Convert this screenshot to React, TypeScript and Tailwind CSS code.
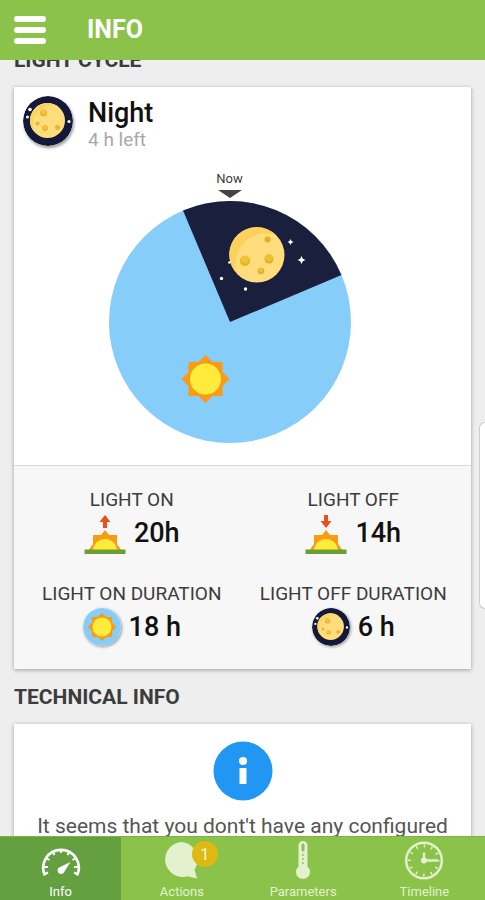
import type { ReactNode } from "react";

interface IconProps {
  className?: string;
}

interface StatProps {
  label: string;
  value: string;
  icon: ReactNode;
}

interface TabProps {
  label: string;
  icon: ReactNode;
  active?: boolean;
  badge?: number;
}

const SUN_RAYS =
  "M24 0 L31 7 H41 V17 L48 24 L41 31 V41 H31 L24 48 L17 41 H7 V31 L0 24 L7 17 V7 H17 Z";

const MoonIcon = ({ className }: IconProps) => (
  <svg viewBox="0 0 50 50" className={className} aria-hidden="true">
    <circle cx="25" cy="25" r="25" fill="#14193a" />
    <circle cx="24.5" cy="24.5" r="17.5" fill="#ffdc7c" />
    <path d="M7 24.5a17.5 17.5 0 0 1 29-13.2A19 19 0 0 0 11 35.5A17.5 17.5 0 0 1 7 24.5Z" fill="#fdd362" />
    <circle cx="20.5" cy="17" r="3.5" fill="#e9b52f" />
    <circle cx="14.5" cy="27.5" r="2" fill="#e9b52f" />
    <circle cx="22" cy="32" r="3" fill="#e9b52f" />
    <circle cx="34.5" cy="31.5" r="2.5" fill="#e9b52f" />
    <circle cx="20.5" cy="16" r="2.5" fill="#f2c443" />
    <circle cx="22" cy="31.3" r="2" fill="#f2c443" />
    <g fill="#fff">
      <circle cx="7" cy="13.5" r="1.8" />
      <circle cx="4.5" cy="21" r="1.5" />
      <circle cx="46" cy="25.5" r="1.6" />
    </g>
  </svg>
);

const SunIcon = ({ className }: IconProps) => (
  <svg viewBox="0 0 64 64" className={className} aria-hidden="true">
    <circle cx="32" cy="32" r="32" fill="#87cdf9" />
    <g transform="translate(8 8)">
      <path d={SUN_RAYS} fill="#fb9a13" />
      <circle cx="24" cy="24" r="16" fill="#ffeb3b" />
    </g>
  </svg>
);

const HorizonIcon = ({ className, down }: IconProps & { down?: boolean }) => (
  <svg viewBox="0 -4 42 44" className={className} aria-hidden="true">
    <path
      d={down ? "M19 0h4v6h3.5L21 13l-5.5-7H19z" : "M21 0l5.5 7H23v6h-4V7h-3.5z"}
      fill="#ec4f1c"
    />
    <path d="M4 36l5-7V20h8l4-5 4 5h8v9l5 7z" fill="#fb9a13" />
    <path d="M9 36a12 12 0 0 1 24 0z" fill="#ffeb3b" />
    <rect x="0.5" y="34.5" width="41" height="4.500" fill="#6a9f38" />
  </svg>
);

const GaugeIcon = ({ className }: IconProps) => (
  <svg viewBox="0 0 40 40" className={className} fill="none" stroke="currentColor" aria-hidden="true">
    <path d="M4 34.500A17.800 17.800 0 1 1 36 34.500" strokeWidth="2.600" />
    <path
      d="M20 8v4M11.500 10.500l2 3.500M28.500 10.500l-2 3.500M5 17l3.500 2M35 17l-3.500 2M2.500 26h4.500M37.500 26h-4.500M4 33l3-1.500M36 33l-3-1.500"
      strokeWidth="2"
    />
    <path d="M29.500 21l-6.300 10a3.500 3.500 0 1 1-4.700-4.700z" fill="currentColor" stroke="none" />
  </svg>
);

const BubbleIcon = ({ className }: IconProps) => (
  <svg viewBox="0 0 40 40" className={className} fill="currentColor" aria-hidden="true">
    <path d="M20 1a17.5 17.5 0 1 0 5.5 34.3L35 37.5l-2.500-9A17.500 17.500 0 0 0 20 1z" />
  </svg>
);

const ThermometerIcon = ({ className }: IconProps) => (
  <svg viewBox="0 0 40 40" className={className} aria-hidden="true">
    <path
      d="M20 0a4.5 4.5 0 0 0-4.5 4.5v21a7 7 0 1 0 9 0v-21A4.5 4.5 0 0 0 20 0z"
      fill="currentColor"
    />
    <path d="M20 4v5" stroke="#8bc34a" strokeWidth="3" strokeLinecap="round" />
    <path d="M20 13v10" stroke="#8bc34a" strokeWidth="2" strokeDasharray="2 2" opacity="0.7" />
  </svg>
);

const ClockIcon = ({ className }: IconProps) => (
  <svg viewBox="0 0 40 40" className={className} fill="none" stroke="currentColor" aria-hidden="true">
    <circle cx="20" cy="19.5" r="17.8" strokeWidth="2.4" />
    <circle cx="20" cy="19.5" r="14.5" strokeWidth="3" strokeDasharray="1.5 6.09" strokeDashoffset="0.75" />
    <path d="M20 11.5v8h14" strokeWidth="2.4" />
    <circle cx="20" cy="19.5" r="3" fill="currentColor" stroke="none" />
  </svg>
);

const CycleChart = () => (
  <svg viewBox="0 0 242 242" className="block size-[242px]" role="img" aria-label="Light cycle">
    <circle cx="121" cy="121" r="121" fill="#87cdf9" />
    <path d="M121 121L74 9.5A121 121 0 0 1 232.5 74Z" fill="#1a1f3d" />
    {/* moon */}
    <circle cx="148" cy="54" r="27.5" fill="#ffdc7c" />
    <path
      d="M126 70.5A27.5 27.5 0 0 1 167 34A30 30 0 0 0 127 60Q125 66 126 70.5Z"
      fill="#fdd15b"
    />
    <g fill="#e3b020">
      <circle cx="136" cy="60" r="5" />
      <circle cx="160" cy="58" r="4.5" />
      <circle cx="152" cy="70" r="3.3" />
      <circle cx="158.5" cy="38.5" r="3" />
    </g>
    <g fill="#efc134">
      <circle cx="136" cy="58.5" r="4" />
      <circle cx="160" cy="56.5" r="3.5" />
      <circle cx="152" cy="69" r="2.3" />
    </g>
    {/* stars */}
    <g fill="#fff">
      <path d="M181.5 38l1 2 2 1-2 1-1 2-1-2-2-1 2-1z" />
      <path d="M192.5 55l1.3 2.7 2.7 1.3-2.7 1.3-1.3 2.7-1.3-2.7-2.7-1.3 2.7-1.3z" />
      <circle cx="112.5" cy="77.5" r="1.7" />
      <circle cx="136.5" cy="88" r="1.7" />
      <circle cx="120.5" cy="61.5" r="1.3" />
    </g>
    <g transform="translate(72.5 154)">
      <path d={SUN_RAYS} fill="#fb9a13" />
      <circle cx="24" cy="24" r="15.5" fill="#ffeb3b" />
    </g>
  </svg>
);

const Stat = ({ label, value, icon }: StatProps) => (
  <div className="flex flex-col items-center">
    <dt className="text-[19px] leading-6 whitespace-nowrap text-[#3c3c3c]">{label}</dt>
    <dd className="flex h-[42px] items-center gap-2 text-[27px] font-medium text-[#111]">
      {icon}
      {value}
    </dd>
  </div>
);

const Tab = ({ label, icon, active, badge }: TabProps) => (
  <button
    type="button"
    className={`flex flex-1 flex-col items-center pt-1 text-[13px] leading-4 ${
      active ? "bg-[#65a040] text-white" : "text-[#e3f1cf]"
    }`}
  >
    <span className="relative mb-[3px]">
      {icon}
      {badge && (
        <span className="absolute top-0 -right-4 flex size-[26px] items-center justify-center rounded-full bg-[#ddb914] text-[17px] text-[#fbf5d0]">
          {badge}
        </span>
      )}
    </span>
    {label}
  </button>
);

const App = () => {
  return (
    <div className="relative flex h-screen flex-col overflow-hidden bg-[#eee] font-['Roboto',sans-serif]">
      <header className="flex h-[60px] shrink-0 items-center bg-[#8bc34a] px-[14px] text-white">
        <button type="button" aria-label="Menu" className="flex w-8 flex-col gap-[5px]">
          <span className="h-[6px] rounded-full bg-white" />
          <span className="h-[6px] rounded-full bg-white" />
          <span className="h-[6px] rounded-full bg-white" />
        </button>
        <h1 className="ml-[41px] text-[25px] font-bold">INFO</h1>
      </header>

      <main className="min-h-0 flex-1 overflow-hidden px-[14px]">
        <section className="-mt-[14px]">
          <h2 className="mb-[13px] text-[21px] leading-7 font-bold text-[#3c3c3c]">LIGHT CYCLE</h2>
          <div className="bg-white shadow-[0_1px_4px_rgba(0,0,0,0.35)]">
            <div className="flex items-start gap-[15px] px-[9px] pt-[9px]">
              <MoonIcon className="size-[50px] rounded-full shadow-[1px_2px_3px_rgba(0,0,0,0.4)]" />
              <div className="pt-[2px]">
                <p className="text-[27px] leading-[30px] font-medium text-[#111]">Night</p>
                <p className="text-[19px] leading-6 text-[#a8a8a8]">4 h left</p>
              </div>
            </div>
            <div className="flex flex-col items-center pt-[19px] pr-[26px] pb-[22px]">
              <p className="text-[13px] leading-4 text-[#3c3c3c]">Now</p>
              <svg viewBox="0 0 24 8" className="mt-[3px] mb-[3px] h-2 w-6" aria-hidden="true">
                <path d="M0 0h24L12 8z" fill="#444" />
              </svg>
              <CycleChart />
            </div>
            <dl className="grid grid-cols-2 gap-y-[28px] border-t border-[#d9d9d9] bg-[#f7f7f7] px-[7px] pt-[22px] pb-[21px]">
              <Stat label="LIGHT ON" value="20h" icon={<HorizonIcon className="h-11 w-[42px]" />} />
              <Stat label="LIGHT OFF" value="14h" icon={<HorizonIcon down className="h-11 w-[42px]" />} />
              <Stat
                label="LIGHT ON DURATION"
                value="18 h"
                icon={<SunIcon className="size-[38px] rounded-full shadow-[1px_1px_3px_rgba(0,0,0,0.4)]" />}
              />
              <Stat
                label="LIGHT OFF DURATION"
                value="6 h"
                icon={<MoonIcon className="size-[38px] rounded-full shadow-[1px_1px_3px_rgba(0,0,0,0.4)]" />}
              />
            </dl>
          </div>
        </section>

        <section className="mt-[14px]">
          <h2 className="mb-[13px] text-[21px] leading-7 font-bold text-[#3c3c3c]">TECHNICAL INFO</h2>
          <div className="flex flex-col items-center bg-white px-2 pt-[17px] pb-6 shadow-[0_1px_4px_rgba(0,0,0,0.35)]">
            <svg viewBox="0 0 60 60" className="size-[60px]" aria-hidden="true">
              <circle cx="30" cy="30" r="29.5" fill="#2196f3" />
              <circle cx="30" cy="20" r="4" fill="#fff" />
              <rect x="26.5" y="27" width="7" height="16" fill="#fff" />
            </svg>
            <p className="mt-[11px] text-center text-[21px] leading-7 text-[#555]">
              It seems that you dont't have any configured
            </p>
          </div>
        </section>
      </main>

      <nav className="flex h-16 shrink-0 border-t border-[#7cb53c] bg-[#8bc34a]">
        <Tab label="Info" active icon={<GaugeIcon className="size-10" />} />
        <Tab label="Actions" badge={1} icon={<BubbleIcon className="size-10" />} />
        <Tab label="Parameters" icon={<ThermometerIcon className="size-10" />} />
        <Tab label="Timeline" icon={<ClockIcon className="size-10" />} />
      </nav>

      {/* edge panel handle */}
      <div className="absolute top-[422px] right-0 h-[187px] w-[6px] rounded-l-md border border-r-0 border-[#ccc] bg-white" />
    </div>
  );
};

export default App;
